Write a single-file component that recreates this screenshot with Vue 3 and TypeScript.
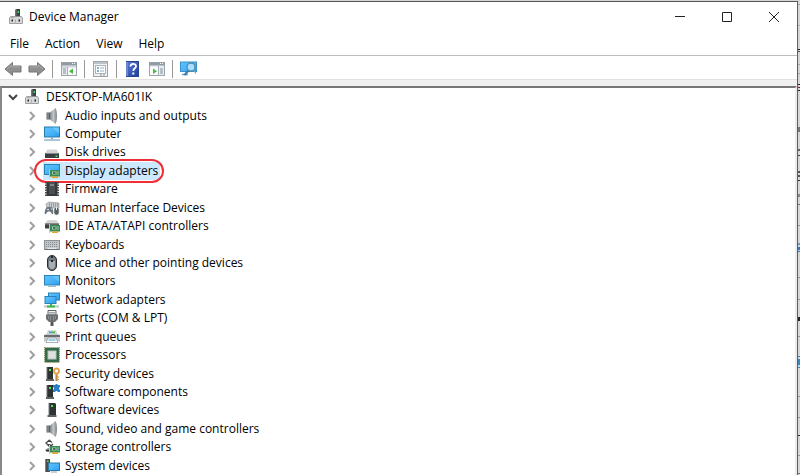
<script setup lang="ts">
import { ref } from 'vue'

interface DeviceClass {
  name: string
  icon: string
}

interface Mark {
  y: number
  h: number
  color: string
}

const menus: string[] = ['File', 'Action', 'View', 'Help']

const classes: DeviceClass[] = [
  { name: 'Audio inputs and outputs', icon: 'speaker' },
  { name: 'Computer', icon: 'computer' },
  { name: 'Disk drives', icon: 'disk' },
  { name: 'Display adapters', icon: 'display' },
  { name: 'Firmware', icon: 'firmware' },
  { name: 'Human Interface Devices', icon: 'hid' },
  { name: 'IDE ATA/ATAPI controllers', icon: 'ide' },
  { name: 'Keyboards', icon: 'keyboard' },
  { name: 'Mice and other pointing devices', icon: 'mouse' },
  { name: 'Monitors', icon: 'monitor' },
  { name: 'Network adapters', icon: 'network' },
  { name: 'Ports (COM & LPT)', icon: 'port' },
  { name: 'Print queues', icon: 'printer' },
  { name: 'Processors', icon: 'cpu' },
  { name: 'Security devices', icon: 'security' },
  { name: 'Software components', icon: 'component' },
  { name: 'Software devices', icon: 'tower' },
  { name: 'Sound, video and game controllers', icon: 'speaker' },
  { name: 'Storage controllers', icon: 'storage' },
  { name: 'System devices', icon: 'system' },
]

const selected = ref<string>('Display adapters')

/* slivers of the window lying behind this one */
const marks: Mark[] = [
  { y: 4, h: 1, color: '#a8a8a8' },
  { y: 25, h: 1, color: '#b0b0b0' },
  { y: 49, h: 1, color: '#222' },
  { y: 51, h: 1, color: '#555' },
  { y: 64, h: 1, color: '#aaa' },
  { y: 73, h: 1, color: '#aaa' },
  { y: 84, h: 1, color: '#222' },
  { y: 87, h: 1, color: '#7a2040' },
  { y: 90, h: 1, color: '#222' },
  { y: 127, h: 5, color: '#777' },
  { y: 149, h: 2, color: '#666' },
  { y: 155, h: 1, color: '#444' },
  { y: 171, h: 2, color: '#555' },
  { y: 175, h: 2, color: '#555' },
  { y: 180, h: 1, color: '#333' },
  { y: 194, h: 3, color: '#888' },
  { y: 204, h: 1, color: '#777' },
  { y: 225, h: 1, color: '#999' },
  { y: 243, h: 2, color: '#6a9acb' },
  { y: 247, h: 3, color: '#3b78b5' },
  { y: 251, h: 1, color: '#3b78b5' },
  { y: 277, h: 1, color: '#999' },
  { y: 299, h: 1, color: '#999' },
  { y: 317, h: 4, color: '#222' },
  { y: 336, h: 1, color: '#999' },
  { y: 356, h: 1, color: '#3b88bf' },
  { y: 359, h: 6, color: '#3b88bf' },
  { y: 367, h: 1, color: '#3b88bf' },
  { y: 396, h: 1, color: '#999' },
  { y: 417, h: 1, color: '#999' },
  { y: 435, h: 1, color: '#333' },
  { y: 455, h: 1, color: '#999' },
  { y: 473, h: 1, color: '#777' },
]
</script>

<template>
  <svg class="sprite" aria-hidden="true">
    <defs>
      <linearGradient id="screen" x1="0" y1="0" x2="1" y2="1">
        <stop offset="0" stop-color="#5cc4ff" />
        <stop offset="0.5" stop-color="#4ab4f8" />
        <stop offset="1" stop-color="#2a9cf0" />
      </linearGradient>
      <linearGradient id="metal" x1="0" y1="0" x2="1" y2="0">
        <stop offset="0" stop-color="#7b8186" />
        <stop offset="0.6" stop-color="#c4c8cb" />
        <stop offset="1" stop-color="#9a9fa3" />
      </linearGradient>
      <linearGradient id="blue" x1="0" y1="0" x2="1" y2="1">
        <stop offset="0" stop-color="#5a7ad2" />
        <stop offset="1" stop-color="#1f3c9c" />
      </linearGradient>
    </defs>
    <symbol id="root" viewBox="0 0 16 16">
      <path d="M7 1l1.500-1H12v8H7z" fill="#3d4143" />
      <path d="M7 1l1.500-1v8H7z" fill="#74787a" />
      <rect x="9.500" y="2" width="1.500" height="2" fill="#3fdc5a" />
      <path d="M1.500 9l1-1.500h11l1 1.500v5.500h-13z" fill="#d6d8d9" stroke="#8d9193" stroke-width=".8" />
      <path d="M3 7.500h3.500V9H3z" fill="#a9adaf" />
      <rect x="3.500" y="10.500" width="1.500" height="2" fill="#222" />
      <rect x="10.500" y="10.500" width="1.500" height="2" fill="#222" />
      <path d="M7 10.500h1v3H7z" fill="#a3a7a9" />
    </symbol>
    <symbol id="speaker" viewBox="0 0 16 16">
      <path d="M2.500 4.500H6v7H2.500z" fill="#5a5f63" />
      <path d="M4 5v6" stroke="#a2a7aa" />
      <path d="M6 4.500L11.500 0v16L6 11.500z" fill="url(#metal)" />
      <path d="M11.500 0c1.700 2 1.700 14 0 16z" fill="#666c70" />
    </symbol>
    <symbol id="computer" viewBox="0 0 16 16">
      <rect x=".5" y="1" width="15" height="10" fill="url(#screen)" stroke="#2879aa" />
      <path d="M8 1.500h7v6z" fill="#82d3ff" opacity=".6" />
      <path d="M7 11.500h2V13H7z" fill="#8ba5b6" />
      <path d="M0 14h16" stroke="#72a0bd" stroke-width="1.200" />
    </symbol>
    <symbol id="monitor" viewBox="0 0 16 16">
      <rect x=".5" y="2.500" width="15" height="9.500" fill="url(#screen)" stroke="#2d82b4" />
      <path d="M8 3h7v6z" fill="#75cdff" opacity=".6" />
      <path d="M4 13.500h8" stroke="#a3bac8" />
      <path d="M7 12h2v1.500H7z" fill="#a3bac8" />
    </symbol>
    <symbol id="disk" viewBox="0 0 16 16">
      <path d="M3.500 5.500h9l2.500 4H1z" fill="#d2d4d5" />
      <rect x="1" y="9" width="14" height="5" rx=".6" fill="#3a3d3f" />
      <path d="M1.500 9.500h13" stroke="#85898c" />
      <rect x="11.500" y="11.500" width="2" height="1.500" fill="#3ee565" />
    </symbol>
    <symbol id="board" viewBox="0 0 16 16">
      <path d="M5.500 6v9" stroke="#bfc7c3" />
      <rect x="6" y="7" width="10" height="6.500" fill="#3b8a54" />
      <rect x="8" y="8.500" width="4.500" height="3" fill="#a9d0ba" />
      <rect x="9" y="9" width="2.500" height="2" fill="#456f56" />
      <path d="M13 9h2M13 11h2" stroke="#8ccb9d" />
      <path d="M8 14.200h6" stroke="#e5a52b" stroke-width="1.600" />
    </symbol>
    <symbol id="display" viewBox="0 0 16 16">
      <rect x=".5" y="1.500" width="15" height="10" fill="url(#screen)" stroke="#2d82b4" />
      <use href="#board" width="16" height="16" />
    </symbol>
    <symbol id="firmware" viewBox="0 0 16 16">
      <rect x="2.500" y="1" width="11" height="14" fill="#36393b" />
      <path d="M2 1v14M14 1v14" stroke="#4a4d50" stroke-width="2" stroke-dasharray="1.500 1" />
      <rect x="5" y="1" width="6" height="14" fill="#4b4f52" />
      <path d="M6 3h4v2H6z" fill="#7f8588" />
      <path d="M5 14h6" stroke="#222" />
    </symbol>
    <symbol id="hid" viewBox="0 0 16 16">
      <path d="M2 4l3-2 10 1v5H3z" fill="#c7cacc" stroke="#929699" stroke-width=".7" />
      <path d="M5 4h9M5 6h9" stroke="#777" stroke-dasharray="1 1" />
      <path d="M1 14c-1-2 1-7 2.500-7h3.500c1.500 0 3 5 2 7-1 1-2-2-3-2.500H4C3 12 2 15 1 14z" fill="#6b7681" />
      <path d="M3 9.500h2M7 9h1" stroke="#dde3e7" />
      <rect x="10" y="7" width="5" height="8" rx="2.500" fill="#555c62" stroke="#d9dcdd" stroke-width=".7" />
      <path d="M12.500 7v3" stroke="#e4e6e7" />
    </symbol>
    <symbol id="ide" viewBox="0 0 16 16">
      <path d="M3.500 2h9L15 6H1z" fill="#d3d5d6" />
      <rect x="1" y="5.500" width="14" height="5" fill="#3d4043" />
      <path d="M1 6h14" stroke="#888c8f" />
      <use href="#board" width="16" height="16" />
    </symbol>
    <symbol id="keyboard" viewBox="0 0 16 16">
      <rect x=".5" y="3.500" width="15" height="9" fill="#c2c5c8" stroke="#8a8f92" />
      <path d="M2 5.500h12M2 7.500h12M2 9.500h12" stroke="#868b8f" stroke-dasharray="1 1" />
      <path d="M4 11.300h8" stroke="#efefef" />
      <path d="M1 12.500h14" stroke="#66717a" />
    </symbol>
    <symbol id="mouse" viewBox="0 0 16 16">
      <rect x="3.500" y=".5" width="9" height="15" rx="4.500" fill="#6f777e" stroke="#292d30" />
      <path d="M5 6h6v4a3 4 0 0 1-6 0z" fill="#a9b0b5" />
      <path d="M8 1v6" stroke="#24282b" stroke-width="2" />
      <path d="M8 3v2" stroke="#c7e6ff" />
    </symbol>
    <symbol id="network" viewBox="0 0 16 16">
      <rect x="4.500" y="1" width="11" height="7" fill="url(#screen)" stroke="#2d82b4" />
      <rect x="1" y="4.500" width="11" height="7" fill="url(#screen)" stroke="#2d82b4" />
      <path d="M6 12h2v2H6z" fill="#37a844" />
      <path d="M0 14.500h15" stroke="#bfc6c9" stroke-width="2" />
      <path d="M3 14.500h8" stroke="#31bd42" stroke-width="2" />
    </symbol>
    <symbol id="port" viewBox="0 0 16 16">
      <path d="M4 .5h8V5H4z" fill="#f2f2f2" stroke="#666" />
      <path d="M6 2v1.500M8 2v1.500M10 2v1.500" stroke="#555" />
      <path d="M2 4.500h12V9l-3 3H5L2 9z" fill="#6a6e71" />
      <path d="M4.500 6v3M6.500 6v4.500M9.500 6v4.500M11.500 6v3" stroke="#96999c" stroke-width=".8" />
      <path d="M8 12v4" stroke="#54585b" stroke-width="3" />
    </symbol>
    <symbol id="printer" viewBox="0 0 16 16">
      <path d="M4 2h8v4H4z" fill="#fff" stroke="#999" stroke-width=".7" />
      <path d="M5 3.500h3" stroke="#32a0ed" stroke-width="2" />
      <path d="M8 3.500h3" stroke="#4fb850" stroke-width="2" />
      <path d="M0 7l2-2.500h12L16 7v5.500H0z" fill="#c3c7c9" />
      <path d="M0 7h16" stroke="#5f6468" stroke-width="1.800" />
      <path d="M4 9h8l2 4.500H2z" fill="#fff" stroke="#8d9396" stroke-width=".7" />
      <path d="M4.500 11h7" stroke="#75bfea" stroke-width="1.500" />
    </symbol>
    <symbol id="cpu" viewBox="0 0 16 16">
      <rect x=".7" y=".7" width="14.600" height="14.600" fill="#316b50" stroke="#9e8e4a" stroke-width="1.200" stroke-dasharray="1 1" />
      <rect x="1.500" y="1.500" width="13" height="13" fill="#2e694d" />
      <rect x="4" y="4" width="8" height="8" fill="#dedfdf" stroke="#b7c8be" />
    </symbol>
    <symbol id="tower" viewBox="0 0 16 16">
      <path d="M5 1h6l1 1v11H5z" fill="#303334" />
      <path d="M4.500 1l1-.5v13h-1z" fill="#777b7d" />
      <rect x="7" y="3" width="2" height="2" fill="#43ed49" />
      <path d="M3.500 14h9" stroke="#5d6264" stroke-width="2" />
    </symbol>
    <symbol id="towerleft" viewBox="0 0 16 16">
      <path d="M3 1h6v12H3z" fill="#303334" />
      <path d="M2.500 1h1v12h-1z" fill="#717577" />
      <rect x="5" y="3" width="2" height="2" fill="#43ed49" />
      <path d="M2 14h8" stroke="#5d6264" stroke-width="2" />
    </symbol>
    <symbol id="security" viewBox="0 0 16 16">
      <use href="#towerleft" width="16" height="16" />
      <path d="M12.500 7v8" stroke="#c88a3a" stroke-width="2.200" />
      <path d="M13.500 11H15M13.500 13.500H15" stroke="#c88a3a" />
      <circle cx="12.500" cy="5" r="2.500" fill="none" stroke="#e3a64e" stroke-width="2" />
    </symbol>
    <symbol id="component" viewBox="0 0 16 16">
      <use href="#towerleft" width="16" height="16" />
      <path d="M9 1h2.500v-1h2v1H16v2.500h-1v2h1V8h-2.500V7h-2v1H9V5.500h1v-2H9z" fill="#297fc8" />
    </symbol>
    <symbol id="storage" viewBox="0 0 16 16">
      <path d="M5.500 1L2 4l3.500 3.500M5 1l3 2.500M3.500 5.500l4 1L9 5" fill="none" stroke="#404446" stroke-width="1.300" />
      <path d="M1 11l3-2h4v4H3z" fill="#92989b" />
      <path d="M2 11.500h4" stroke="#303334" stroke-width="1.500" />
      <use href="#board" width="16" height="16" />
    </symbol>
    <symbol id="system" viewBox="0 0 16 16">
      <path d="M1 1h5v13H1z" fill="#4a4e50" />
      <path d="M1.500 1v13" stroke="#7d8285" />
      <rect x="3" y="2.500" width="1.500" height="1.500" fill="#43ed49" />
      <rect x="4.500" y="5" width="11" height="7.500" fill="url(#screen)" stroke="#2d7aaa" />
      <path d="M7 14h6" stroke="#8aa3b2" />
    </symbol>
    <symbol id="back" viewBox="0 0 18 18">
      <path d="M1 9l7.500-6.500V6H17v6H8.500v3.500z" fill="#8f8f8f" stroke="#777" />
      <path d="M3 9l5-4v2h8" fill="none" stroke="#aaa" />
    </symbol>
    <symbol id="forward" viewBox="0 0 18 18">
      <path d="M17 9L9.500 2.500V6H1v6h8.500v3.500z" fill="#8f8f8f" stroke="#777" />
      <path d="M2 7h8V5l5 4" fill="none" stroke="#aaa" />
    </symbol>
    <symbol id="tree" viewBox="0 0 18 18">
      <rect x="1.500" y="2.500" width="15" height="13" fill="#e9edf0" stroke="#9ca5ac" />
      <path d="M1 4h16" stroke="#8f9ba5" stroke-width="3" />
      <path d="M12 3.500h1M14 3.500h1" stroke="#fff" />
      <path d="M2 7h14" stroke="#b8c1c7" />
      <path d="M7.500 7v8" stroke="#a6b0b7" />
      <path d="M3 9h3M3 11h3M3 13h3" stroke="#83929d" />
      <rect x="8" y="7.500" width="8" height="7.500" fill="#fafafa" />
      <path d="M13 8.500v5.500L9 11.200z" fill="#45ba45" />
    </symbol>
    <symbol id="properties" viewBox="0 0 18 18">
      <rect x="1.500" y="1.500" width="14" height="15" fill="#f0f2f4" stroke="#9da5aa" />
      <path d="M2 3h13" stroke="#bbc4ca" stroke-width="2" />
      <rect x="3.500" y="5.500" width="10" height="8" fill="#fff" stroke="#abb5bb" />
      <path d="M5 8h2M5 11h2" stroke="#4b9bd8" stroke-width="1.500" />
      <path d="M8 8h4M8 11h4" stroke="#a2abb1" />
      <path d="M8 15h2M11 15h2" stroke="#89949b" />
    </symbol>
    <symbol id="help" viewBox="0 0 18 18">
      <rect x="2.500" y="1.500" width="12" height="15" fill="url(#blue)" stroke="#294591" />
      <path d="M3 2v14" stroke="#7c94d9" stroke-width="1.500" />
      <path d="M6.500 6.500c0-3.500 5.500-3.300 5.500-.3C12 8.500 9.300 8 9.300 11" fill="none" stroke="#fff" stroke-width="1.800" />
      <path d="M8.300 12.500h2v2h-2z" fill="#fff" />
    </symbol>
    <symbol id="action" viewBox="0 0 18 18">
      <rect x="1.500" y="2.500" width="15" height="13" fill="#e9edf0" stroke="#9ca5ac" />
      <path d="M1 4h16" stroke="#8f9ba5" stroke-width="3" />
      <path d="M12 3.500h1M14 3.500h1" stroke="#fff" />
      <rect x="2" y="7" width="8" height="8" fill="#fafafa" />
      <path d="M10.500 6v9" stroke="#a6b0b7" />
      <path d="M12 9h3M12 11h3M12 13h3" stroke="#83929d" />
      <path d="M5 8.500v5.500l4-2.800z" fill="#45ba45" />
    </symbol>
    <symbol id="scan" viewBox="0 0 18 18">
      <rect x=".5" y="2" width="16" height="9.500" fill="url(#screen)" stroke="#3b91c3" />
      <path d="M2 14.500h6" stroke="#6e9eba" stroke-width="1.500" />
      <path d="M9 10l-4.500 5" stroke="#397caa" stroke-width="2" />
      <circle cx="11" cy="7" r="4" fill="#a7defd" stroke="#4e8dac" stroke-width="1.300" />
      <path d="M14 10.500l2 3" stroke="#6aa9cc" stroke-width="1.300" />
    </symbol>
  </svg>

  <div class="desktop">
    <main class="window">
      <header class="titlebar">
        <svg class="icon"><use href="#root" /></svg>
        <h1>Device Manager</h1>
        <div class="controls">
          <button type="button" aria-label="Minimize">
            <svg viewBox="0 0 12 12"><path d="M1 5.500h10" /></svg>
          </button>
          <button type="button" aria-label="Maximize">
            <svg viewBox="0 0 12 12"><path d="M1.500 1.500h9v9h-9z" /></svg>
          </button>
          <button type="button" aria-label="Close">
            <svg viewBox="0 0 12 12"><path d="M1 1l10 10M11 1L1 11" /></svg>
          </button>
        </div>
      </header>

      <nav class="menubar">
        <button v-for="menu in menus" :key="menu" type="button">{{ menu }}</button>
      </nav>

      <div class="toolbar">
        <button type="button" aria-label="Back"><svg><use href="#back" /></svg></button>
        <button type="button" aria-label="Forward"><svg><use href="#forward" /></svg></button>
        <span class="divider"></span>
        <button type="button" aria-label="Show console tree"><svg><use href="#tree" /></svg></button>
        <span class="divider"></span>
        <button type="button" aria-label="Properties"><svg><use href="#properties" /></svg></button>
        <span class="divider"></span>
        <button type="button" aria-label="Help topics"><svg><use href="#help" /></svg></button>
        <button type="button" aria-label="Show action pane"><svg><use href="#action" /></svg></button>
        <span class="divider"></span>
        <button type="button" aria-label="Scan for hardware changes"><svg><use href="#scan" /></svg></button>
      </div>

      <div class="tree" role="tree" aria-label="Devices">
        <div class="row root" role="treeitem" aria-expanded="true">
          <svg class="chevron open" viewBox="0 0 10 10"><path d="M1 3l4 4 4-4" /></svg>
          <svg class="icon"><use href="#root" /></svg>
          <span class="label">DESKTOP-MA601IK</span>
        </div>
        <div
          v-for="item in classes"
          :key="item.name"
          class="row"
          :class="{ selected: item.name === selected }"
          role="treeitem"
          aria-expanded="false"
          :aria-selected="item.name === selected"
          @click="selected = item.name"
        >
          <svg class="chevron" viewBox="0 0 10 10"><path d="M3 1l4 4-4 4" /></svg>
          <span class="entry">
            <svg class="icon"><use :href="'#' + item.icon" /></svg>
            <span class="label">{{ item.name }}</span>
          </span>
        </div>
      </div>
    </main>

    <svg class="behind" aria-hidden="true">
      <rect v-for="m in marks" :key="m.y" x="0" :y="m.y" width="2" :height="m.h" :fill="m.color" />
    </svg>
  </div>
</template>

<style>
body {
  margin: 0;
}
</style>

<style scoped>
.sprite {
  position: absolute;
  width: 0;
  height: 0;
}

.desktop {
  display: flex;
  box-sizing: border-box;
  min-height: 100vh;
  padding-top: 1px;
  background: #d6d6d6;
  font-family: 'Open Sans', 'Noto Sans', sans-serif;
  font-size: 12px;
  line-height: 16px;
  color: #000;
}

.window {
  flex: 1;
  display: flex;
  flex-direction: column;
  min-width: 0;
  border-top: 1px solid #555;
  border-right: 1px solid #5e5e5e;
  background: #fff;
}

.behind {
  flex: none;
  width: 2px;
  height: auto;
  margin-top: -1px;
}

button {
  display: flex;
  align-items: center;
  justify-content: center;
  padding: 0;
  border: 0;
  background: none;
  font: inherit;
  color: inherit;
}

.icon {
  flex: none;
  width: 16px;
  height: 16px;
}

.titlebar {
  display: flex;
  align-items: center;
  height: 30px;
  padding-left: 8px;
  gap: 5px;
}

h1 {
  margin: 0;
  font: inherit;
}

.controls {
  display: flex;
  align-self: stretch;
  margin-left: auto;
}

.controls button {
  width: 47px;
}

.controls svg {
  width: 12px;
  height: 12px;
  fill: none;
  stroke: #222;
}

.menubar {
  display: flex;
  align-items: center;
  height: 23px;
  gap: 16px;
  padding-left: 10px;
  border-bottom: 1px solid #bcbcbc;
}

.toolbar {
  display: flex;
  align-items: center;
  box-sizing: border-box;
  height: 24px;
  gap: 6px;
  padding: 2px 4px 0;
  border-bottom: 1px solid #e0e0e0;
}

.toolbar svg {
  width: 18px;
  height: 18px;
}

.divider {
  width: 1px;
  height: 18px;
  margin-right: 1px;
  background: #999;
}

.tree {
  flex: 1;
  display: grid;
  grid-auto-rows: minmax(18px, 1fr);
  border-top: 2px solid #777;
  border-left: 2px solid #888;
  border-right: 2px solid #ededed;
  outline: 6px solid #f0f0f0;
  margin-top: 6px;
  clip-path: inset(-6px 0 0 0);
}

.row {
  display: flex;
  align-items: center;
  padding-left: 25px;
  gap: 7px;
}

.root {
  padding-left: 6px;
  gap: 6px;
}

.entry {
  position: relative;
  display: flex;
  align-items: center;
  gap: 4px;
}

.label {
  white-space: nowrap;
  padding: 0 1px;
}

.root .label {
  padding: 0;
}

.selected .entry {
  background: #cce8ff;
  box-shadow: 0 0 0 1px #cce8ff;
}

.selected .entry::after {
  content: '';
  position: absolute;
  inset: -4px -5px -4px -10px;
  border: 2px solid #ee2f36;
  border-radius: 12px;
}

.chevron {
  flex: none;
  width: 10px;
  height: 10px;
  fill: none;
  stroke: #a0a0a0;
  stroke-width: 2;
}

.open {
  stroke: #444;
}
</style>
